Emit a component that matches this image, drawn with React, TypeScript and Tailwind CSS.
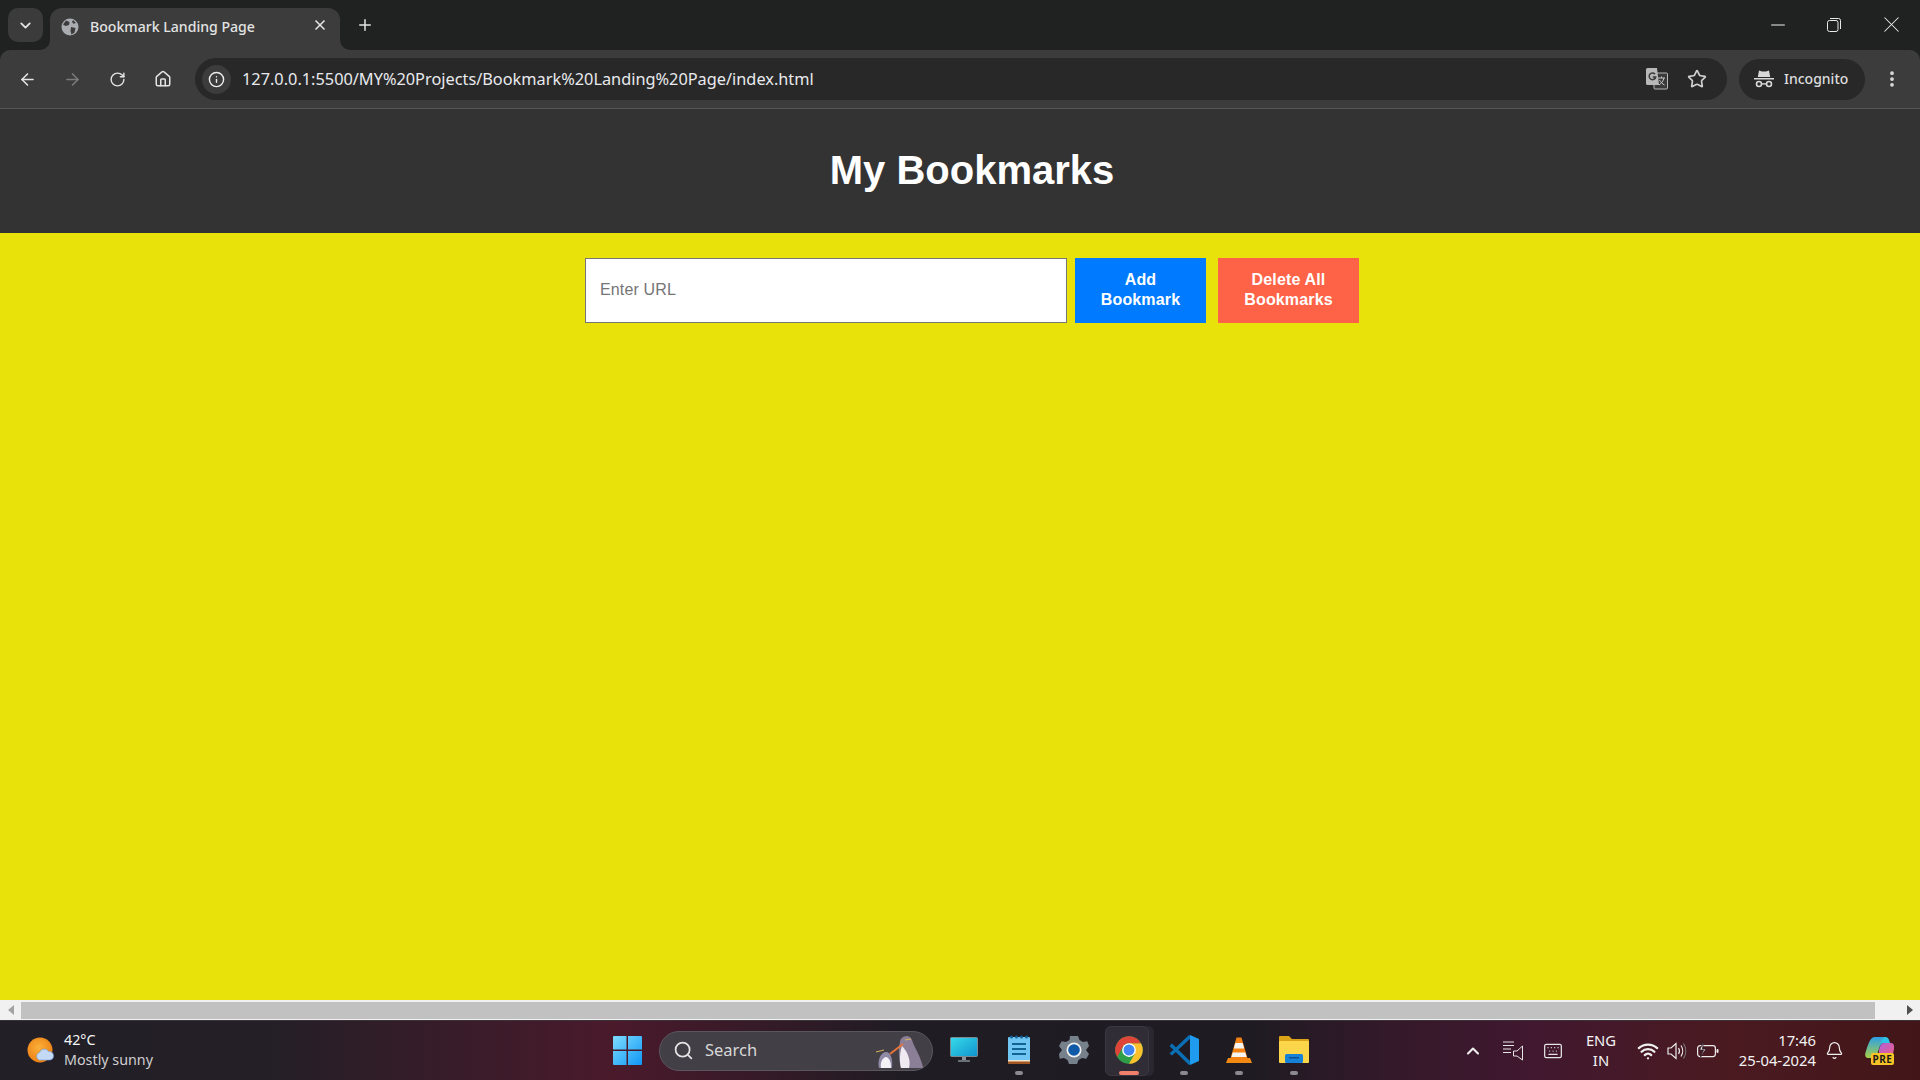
import {
  ArrowLeft,
  ArrowRight,
  Bell,
  ChevronDown,
  ChevronUp,
  EllipsisVertical,
  Home,
  Info,
  Keyboard,
  Minus,
  Plus,
  RotateCw,
  Search,
  Star,
  Wifi,
  X,
} from "lucide-react";

function TabFlare({ flip }: { flip?: boolean }) {
  return (
    <svg width="10" height="10" viewBox="0 0 10 10" className={flip ? "absolute bottom-0 right-[-10px] scale-x-[-1]" : "absolute bottom-0 left-[-10px]"}>
      <path d="M10 0V10H0A10 10 0 0 0 10 0Z" fill="#3c3c3c" />
    </svg>
  );
}

function TabGlobe() {
  return (
    <svg width="18" height="18" viewBox="0 0 18 18">
      <circle cx="9" cy="9" r="8.5" fill="#a9acb0" />
      <path d="M5 2.5 8.5 4 8 7 4.5 8 2 6.5ZM10 9l4.5 1-1 4.5-3 2-1-3.5ZM12 2l3 3-2.5.8L11 4Z" fill="#3c3c3c" />
    </svg>
  );
}

function RestoreIcon() {
  return (
    <svg width="14" height="14" viewBox="0 0 14 14" fill="none" stroke="#e8e8e8" strokeWidth="1">
      <rect x="0.5" y="2.5" width="10.5" height="11" rx="2" />
      <path d="M3 .5h8.5a2 2 0 0 1 2 2V11" />
    </svg>
  );
}

function TranslateIcon() {
  return (
    <svg width="22" height="22" viewBox="0 0 22 22">
      <rect x="8" y="5" width="13.5" height="16" rx="1" fill="#3a3a3a" stroke="#b8b8b8" />
      <path d="M12 10h7M15.5 8.5V10M18 10c-.6 3-2.8 5.500-5 7M13.500 12c1 2 3 4 5 5" fill="none" stroke="#c4c4c4" strokeWidth="1" />
      <path d="M1.500 0H11l2 17H1.500A1.500 1.500 0 0 1 0 15.500V1.500A1.500 1.500 0 0 1 1.500 0Z" fill="#b9b9b9" />
      <path d="M9 6.200A3.300 3.300 0 1 0 9.700 9H6.700" fill="none" stroke="#3a3a3a" strokeWidth="1.500" />
    </svg>
  );
}

function IncognitoIcon() {
  return (
    <svg width="20" height="20" viewBox="0 0 20 20" fill="#d8d8d8">
      <path d="M3.800 8 5 1.500 8 2.500h4l3-1L16.200 8Z" />
      <rect x="0" y="9" width="20" height="1.500" />
      <circle cx="5" cy="15" r="2.500" fill="none" stroke="#d8d8d8" strokeWidth="1.600" />
      <circle cx="15" cy="15" r="2.500" fill="none" stroke="#d8d8d8" strokeWidth="1.600" />
      <rect x="7.500" y="14.200" width="5" height="1.400" />
    </svg>
  );
}

function WeatherIcon() {
  return (
    <svg width="28" height="28" viewBox="0 0 28 28">
      <defs>
        <radialGradient id="sun" cx="45%" cy="40%" r="65%">
          <stop offset="0%" stopColor="#fbb03b" />
          <stop offset="100%" stopColor="#ea7d10" />
        </radialGradient>
      </defs>
      <circle cx="13" cy="13" r="12.500" fill="url(#sun)" />
      <path d="M12 23a4 4 0 0 1 .5-7.500 5 5 0 0 1 9-1 4.300 4.300 0 0 1 5 4.500 4 4 0 0 1-3.500 4Z" fill="#c3d9f5" stroke="#6fa2e4" strokeWidth="0.600" />
    </svg>
  );
}

function WindowsLogo() {
  return (
    <svg width="29" height="29" viewBox="0 0 29 29">
      <defs>
        <linearGradient id="win" x1="0" y1="0" x2="1" y2="1">
          <stop offset="0%" stopColor="#7fdcff" />
          <stop offset="100%" stopColor="#0f97f5" />
        </linearGradient>
      </defs>
      <path d="M1 0h12.500v13.500H0V1a1 1 0 0 1 1-1ZM15 0h13a1 1 0 0 1 1 1v12.500H15ZM0 15h13.500v14H1a1 1 0 0 1-1-1ZM15 15h14v13a1 1 0 0 1-1 1H15Z" fill="url(#win)" />
    </svg>
  );
}

function Penguins() {
  return (
    <svg width="48" height="38" viewBox="0 0 48 38">
      <path d="M24 10c0-3 3-6 7-6 3 0 5 3 6 7 2 5 7 12 10 24 0 1-1 1-2 1H25c-2-8-3-18-1-26Z" fill="#8b7f98" />
      <path d="M26 14c-2 6-3 15-1 22h8c2-7-1-16-7-22Z" fill="#efeaf2" />
      <path d="M3 36c-2-8 2-16 7-16 5 0 7 8 6 16Z" fill="#8f8aa6" />
      <path d="M5 36c-1-5 1-10 5-11 4 1 5 6 5 11Z" fill="#f4f2f6" />
      <path d="M14 22 27 12" stroke="#e8733a" strokeWidth="2" />
      <path d="M0 20l8-2M29 8l6-1" stroke="#d9b45a" strokeWidth="1" />
    </svg>
  );
}

function MonitorIcon() {
  return (
    <svg width="28" height="26" viewBox="0 0 28 26">
      <defs>
        <linearGradient id="mon" x1="0" y1="0" x2="1" y2="1">
          <stop offset="0%" stopColor="#38dbe9" />
          <stop offset="100%" stopColor="#0f93cf" />
        </linearGradient>
      </defs>
      <rect x="0.500" y="0.500" width="27" height="19" rx="1" fill="url(#mon)" stroke="#7b8a92" />
      <rect x="12" y="20" width="4" height="3" fill="#8b9299" />
      <rect x="8" y="23" width="12" height="2" rx="0.500" fill="#6b7178" />
    </svg>
  );
}

function NotepadIcon() {
  return (
    <svg width="22" height="30" viewBox="0 0 22 30">
      <rect x="0" y="2" width="22" height="27" rx="1" fill="#6fc6f2" />
      <path d="M0 26h22v2a1 1 0 0 1-1 1H1a1 1 0 0 1-1-1Z" fill="#a3561f" />
      <rect x="0" y="25" width="22" height="1.500" fill="#f1e4d0" />
      <path d="M4 9h14M4 14h14M4 19h14" stroke="#12638f" strokeWidth="2" />
      <circle cx="3.500" cy="2" r="1.500" fill="#14639a" />
      <circle cx="8.500" cy="2" r="1.500" fill="#14639a" />
      <circle cx="13.500" cy="2" r="1.500" fill="#14639a" />
      <circle cx="18.500" cy="2" r="1.500" fill="#14639a" />
    </svg>
  );
}

function GearIcon() {
  return (
    <svg width="30" height="30" viewBox="0 0 30 30">
      <path
        d="M11 1h8l1.500 4 3.500 2 4.300-.7L30 11l-3 4 3 4-2.700 4.700-4.300-.7-3.500 2-1.500 4h-8l-1.500-4-3.500-2-4.300.7L0 19l3-4-3-4 2.700-4.700L7 7l3.500-2Z"
        fill="#77818c"
        strokeLinejoin="round"
      />
      <circle cx="15" cy="15" r="7.500" fill="#f0f0f0" />
      <circle cx="15" cy="15" r="5.800" fill="#0f5aa8" />
    </svg>
  );
}

function ChromeIcon() {
  return (
    <svg width="30" height="30" viewBox="0 0 48 48">
      <circle cx="24" cy="24" r="22" fill="#2f9e48" />
      <path d="M24 13H43.050A22 22 0 0 1 24 46L33.500 29.500Z" fill="#fbc02d" />
      <path d="M24 13H43.050A22 22 0 0 0 4.950 13 22 22 0 0 0 5 35L14.500 18.500A11 11 0 0 1 24 13Z" fill="#de4437" />
      <circle cx="24" cy="24" r="11" fill="#ffffff" />
      <circle cx="24" cy="24" r="8.800" fill="#3f86f4" />
    </svg>
  );
}

function VsCodeIcon() {
  return (
    <svg width="30" height="30" viewBox="0 0 30 30">
      <path d="M23 2 3 20.500 .5 18.500 20 0ZM3 8.500 23 28 20 30 .5 11Z" fill="#0a6fb5" />
      <path d="M21 0 30 4V26L21 30V22L21 8Z" fill="#1f9cf0" />
    </svg>
  );
}

function VlcIcon() {
  return (
    <svg width="26" height="28" viewBox="0 0 26 28">
      <path d="M2 22h22l2 5H0Z" fill="#f08a12" />
      <path d="M10.500 1.500h5L22 24H4Z" fill="#f58212" />
      <path d="M9.300 7h7.400l1.400 5.500H7.800ZM6.700 16.500h12.600l1.300 4.500H5.400Z" fill="#f5f5f5" />
    </svg>
  );
}

function FolderIcon() {
  return (
    <svg width="30" height="27" viewBox="0 0 30 27">
      <path d="M1 0h9l3 3h16a1 1 0 0 1 1 1v4H0V1a1 1 0 0 1 1-1Z" fill="#dba418" />
      <rect x="0" y="5" width="30" height="22" rx="1" fill="#fbd54a" />
      <rect x="6" y="18" width="18" height="9" rx="1.500" fill="#1582d8" />
      <rect x="10" y="21" width="10" height="1.500" fill="#0d4f8f" />
    </svg>
  );
}

function CopilotIcon() {
  return (
    <div className="relative h-[30px] w-[30px]">
      <svg width="30" height="26" viewBox="0 0 30 26">
        <defs>
          <linearGradient id="copA" x1="0" y1="0" x2="0" y2="1">
            <stop offset="0%" stopColor="#2b9fe8" />
            <stop offset="100%" stopColor="#a8d144" />
          </linearGradient>
          <linearGradient id="copB" x1="0" y1="0" x2="1" y2="1">
            <stop offset="0%" stopColor="#b25fd6" />
            <stop offset="100%" stopColor="#f0608c" />
          </linearGradient>
        </defs>
        <path d="M10 1h10c-3 2-5 8-7 15-1 4-3 6-7 6H3c-3 0-3.500-3-2-7C3 9 5 1 10 1Z" fill="url(#copA)" />
        <path d="M20 1c3 0 4 2 5 6h-6c-3 0-4 3-5 6 1-5 3-12 6-12Z" fill="#2ec4e8" />
        <path d="M14 22h10c3 0 5-6 5-11 0-3-1-4-3-4h-7c-3 0-4 3-5 7Z" fill="url(#copB)" />
      </svg>
      <span className="absolute left-[6px] top-[17px] h-[12px] w-[23px] rounded-[2px] bg-[#f7c325] text-center text-[10px] font-bold leading-[12px] tracking-[0.5px] text-[#1b1b1b]">PRE</span>
    </div>
  );
}

function NotifyListIcon() {
  return (
    <svg width="20" height="20" viewBox="0 0 20 20" fill="none" stroke="#e4e4e4" strokeWidth="1">
      <path d="M0 1h11M0 4.500h11M0 8h8M0 11.500h8" />
      <path d="M19.500 5v14L14 15h-3.500V10H14Z" />
    </svg>
  );
}

function VolumeIcon() {
  return (
    <svg width="20" height="20" viewBox="0 0 20 20" fill="none" stroke="#ececec" strokeWidth="1.200">
      <path d="M1 7h3l5-4.500v15L4 13H1Z" />
      <path d="M11.500 7c1.200 1.800 1.200 4.200 0 6M14 4.500c2.200 3.200 2.200 7.800 0 11" />
      <path d="M16.500 2.500c3 4.500 3 10.500 0 15" stroke="#777" />
    </svg>
  );
}

function BatteryIcon() {
  return (
    <svg width="22" height="20" viewBox="0 0 22 20" fill="none" stroke="#ececec" strokeWidth="1.200">
      <rect x="0.600" y="4.600" width="17.800" height="11" rx="2.500" />
      <rect x="19.500" y="8" width="2" height="4" rx="1" fill="#ececec" stroke="none" />
      <path d="M6.500 1 2.500 9h4L3.500 16 9 8H5.500Z" fill="#ececec" stroke="#2b1a26" strokeWidth="0.800" />
    </svg>
  );
}

function ToolbarButton({ children }: { children: React.ReactNode }) {
  return <div className="flex h-[58px] w-[45px] items-center justify-center">{children}</div>;
}

function DockSlot({ children, dot, active }: { children: React.ReactNode; dot?: boolean; active?: boolean }) {
  return (
    <div className="relative flex h-[60px] w-[55px] items-center justify-center">
      {active && (
        <>
          <div className="absolute left-[33px] top-[5px] h-[50px] w-[20px] rounded-[6px] bg-[#2a2730]" />
          <div className="absolute left-[4px] top-[5px] h-[50px] w-[44px] rounded-[6px] border border-[#3a3740] bg-[#302d36]" />
          <div className="absolute bottom-[6px] left-[18px] h-[4px] w-[20px] rounded-full bg-[#f0806a]" />
        </>
      )}
      <div className="relative mb-[2px]">{children}</div>
      {dot && <div className="absolute bottom-[6px] left-[24px] h-[4px] w-[8px] rounded-full bg-[#8c8a90]" />}
    </div>
  );
}

export default function App() {
  return (
    <div className="flex h-screen w-[1920px] flex-col overflow-hidden bg-[#202222] font-['Noto_Sans',sans-serif]">
      {/* Tab strip */}
      <div className="flex h-[50px] shrink-0 items-end pl-[8px]">
        <div className="mb-[8px] flex h-[34px] w-[35px] items-center justify-center rounded-[10px] bg-[#3b3b3b]">
          <ChevronDown size={17} strokeWidth={2.5} className="text-[#e4e4e4]" />
        </div>
        <div className="relative ml-[7px] flex h-[42px] w-[290px] items-center rounded-t-[12px] bg-[#3c3c3c] pb-[4px] pl-[11px]">
          <TabFlare />
          <TabFlare flip />
          <TabGlobe />
          <span className="ml-[11px] text-[14.100px] font-medium leading-none text-[#e3e3e3]">Bookmark Landing Page</span>
          <X size={16} strokeWidth={2.5} className="absolute left-[262px] top-[9px] text-[#e3e3e3]" />
        </div>
        <Plus size={18} strokeWidth={2} className="mb-[16px] ml-[16px] text-[#e3e3e3]" />
        <div className="mb-[12px] ml-auto flex items-center">
          <Minus size={22} strokeWidth={1.1} className="text-[#ededed]" />
          <div className="ml-[38px]"><RestoreIcon /></div>
          <X size={27} strokeWidth={0.9} className="ml-[37px] mr-[15px] text-[#ededed]" />
        </div>
      </div>

      {/* Toolbar */}
      <div className="flex h-[59px] shrink-0 items-center rounded-t-[10px] border-b border-[#545454] bg-[#3c3c3c] pl-[5px]">
        <ToolbarButton><ArrowLeft size={19} strokeWidth={2} className="text-[#e3e3e3]" /></ToolbarButton>
        <ToolbarButton><ArrowRight size={19} strokeWidth={2} className="text-[#7b7b7b]" /></ToolbarButton>
        <ToolbarButton><RotateCw size={17} strokeWidth={2} className="text-[#e3e3e3]" /></ToolbarButton>
        <ToolbarButton><Home size={18} strokeWidth={2} className="text-[#e3e3e3]" /></ToolbarButton>
        <div className="ml-[10px] flex h-[42px] w-[1532px] items-center rounded-full bg-[#282828] pl-[7px]">
          <div className="flex h-[29px] w-[29px] items-center justify-center rounded-full bg-[#3c3c3c]">
            <Info size={17} strokeWidth={2} className="text-[#eeeeee]" />
          </div>
          <span className="ml-[11px] pt-[1px] text-[16.320px] leading-none text-[#e8eaed]">127.0.0.1:5500/MY%20Projects/Bookmark%20Landing%20Page/index.html</span>
          <div className="ml-auto flex items-center pr-[20px]">
            <TranslateIcon />
            <Star size={20} strokeWidth={2} className="ml-[19px] text-[#d0d0d0]" />
          </div>
        </div>
        <div className="ml-[12px] flex h-[41px] w-[126px] items-center rounded-full bg-[#282828] pl-[15px]">
          <IncognitoIcon />
          <span className="ml-[10px] text-[14px] font-medium leading-none text-[#dcdcdc]">Incognito</span>
        </div>
        <EllipsisVertical size={20} strokeWidth={2.5} className="ml-[17px] text-[#dcdcdc]" />
      </div>

      {/* Page */}
      <div className="min-h-0 flex-1 overflow-hidden bg-[#e8e10a] font-['Liberation_Sans',Arial,sans-serif]">
        <div className="w-[1944px]">
          <header className="flex h-[124px] items-center justify-center bg-[#333333] pb-[2px]">
            <h1 className="text-[40px] font-bold leading-none text-white">My Bookmarks</h1>
          </header>
          <div className="flex justify-center pt-[25px]">
            <input
              type="text"
              placeholder="Enter URL"
              className="h-[65px] w-[482px] border border-[#767676] bg-white px-[14px] pb-[2px] text-[16px] tracking-[0.15px] text-black outline-none placeholder:text-[#757575]"
            />
            <button className="ml-[8px] h-[65px] w-[131px] bg-[#007bff] px-[20px] pb-[2px] text-[16px] font-bold leading-[20px] tracking-[0.15px] text-white">Add Bookmark</button>
            <button className="ml-[12px] h-[65px] w-[141px] bg-[#ff6347] px-[20px] pb-[2px] text-[16px] font-bold leading-[20px] tracking-[0.15px] text-white">Delete All Bookmarks</button>
          </div>
        </div>
      </div>

      {/* Horizontal scrollbar */}
      <div className="flex h-[20px] shrink-0 items-center justify-between bg-[#f1f1f1]">
        <div className="flex w-[21px] justify-center">
          <div className="h-0 w-0 border-y-[5px] border-r-[6px] border-y-transparent border-r-[#a3a3a3]" />
        </div>
        <div className="h-[17px] w-[1854px] bg-[#c1c1c1]" />
        <div className="flex w-[45px] justify-center pl-[24px]">
          <div className="h-0 w-0 border-y-[5px] border-l-[6px] border-y-transparent border-l-[#505050]" />
        </div>
      </div>

      {/* Windows taskbar */}
      <div className="flex h-[60px] shrink-0 items-center border-t border-[#3a3238] bg-[linear-gradient(90deg,#221f27_0%,#241f27_14%,#4a1a2b_32%,#3a1a28_38%,#1f1c24_47%,#1e1b22_65%,#33192a_72%,#41182f_80%,#4a1a20_90%,#421619_100%)] text-white">
        <div className="flex w-[613px] shrink-0 items-center pl-[27px]">
          <WeatherIcon />
          <div className="ml-[9px] flex flex-col pb-[2px] text-[14.300px] leading-[20px]">
            <span className="text-[#f5f5f5]">42°C</span>
            <span className="text-[#cfcfcf]">Mostly sunny</span>
          </div>
        </div>
        <WindowsLogo />
        <div className="ml-[17px] flex h-[40px] w-[274px] items-center rounded-full border border-[#5a5660] bg-[#423f46] pl-[13px]">
          <Search size={21} strokeWidth={2} className="text-[#e4e4e4]" />
          <span className="ml-[11px] text-[16.500px] leading-none text-[#d8d8d8]">Search</span>
          <div className="ml-auto mr-[8px]"><Penguins /></div>
        </div>
        <div className="ml-[3px] flex items-center">
          <DockSlot><MonitorIcon /></DockSlot>
          <DockSlot dot><NotepadIcon /></DockSlot>
          <DockSlot><GearIcon /></DockSlot>
          <DockSlot active><ChromeIcon /></DockSlot>
          <DockSlot dot><VsCodeIcon /></DockSlot>
          <DockSlot dot><VlcIcon /></DockSlot>
          <DockSlot dot><FolderIcon /></DockSlot>
        </div>
        <div className="ml-auto flex items-center pr-[25px]">
          <ChevronUp size={20} strokeWidth={2.5} className="text-[#efefef]" />
          <div className="ml-[20px]"><NotifyListIcon /></div>
          <Keyboard size={20} strokeWidth={1.5} className="ml-[20px] text-[#e4e4e4]" />
          <div className="ml-[18px] flex w-[40px] flex-col items-center pb-[2px] text-[14.800px] leading-[20px] text-[#f2f2f2]">
            <span>ENG</span>
            <span>IN</span>
          </div>
          <Wifi size={22} strokeWidth={2.5} className="ml-[16px] text-[#f0f0f0]" />
          <div className="ml-[8px]"><VolumeIcon /></div>
          <div className="ml-[10px]"><BatteryIcon /></div>
          <div className="flex w-[97px] flex-col items-end pb-[2px] text-[14.800px] leading-[20px] text-[#f2f2f2]">
            <span>17:46</span>
            <span>25-04-2024</span>
          </div>
          <Bell size={19} strokeWidth={1.5} className="ml-[9px] text-[#f2f2f2]" />
          <div className="ml-[21px]"><CopilotIcon /></div>
        </div>
      </div>
    </div>
  );
}
